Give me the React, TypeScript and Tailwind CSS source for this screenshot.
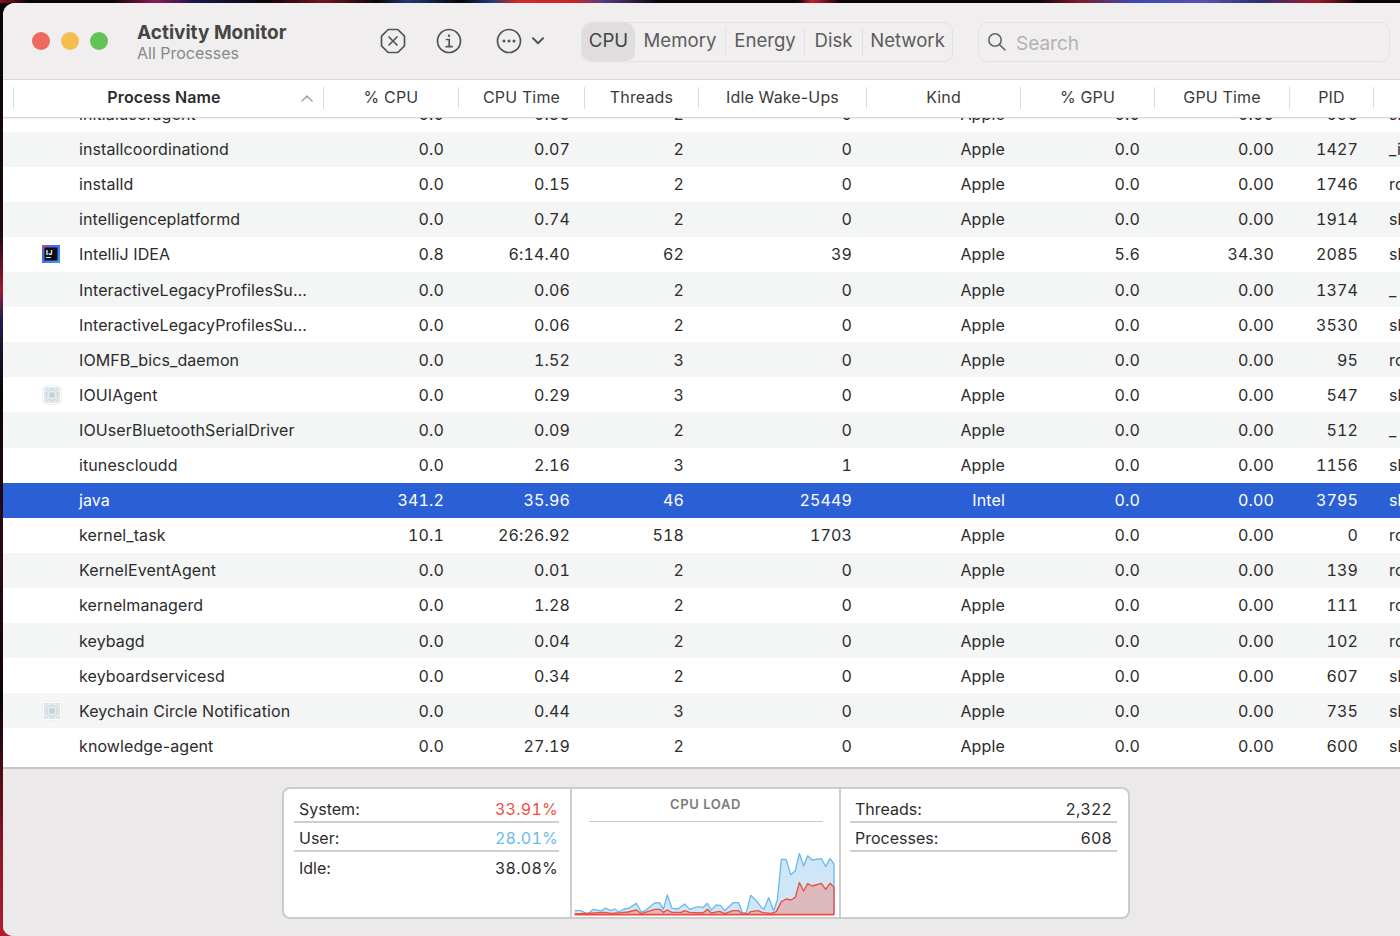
import React from "react";

const COLS = ["w-[135px]", "w-[126px]", "w-[114px]", "w-[168px]", "w-[154px]", "w-[134px]", "w-[135px]", "w-[84px]"];
const CELL = ["pr-[15px]", "pr-[15px]", "pr-[15px]", "pr-[15px]", "pr-[16px]", "pr-[15px]", "pr-[16px]", "pr-[16px]"];
const HEAD = ["% CPU", "CPU Time", "Threads", "Idle Wake-Ups", "Kind", "% GPU", "GPU Time", "PID"];

type Row = { name: string; icon?: "ij" | "app"; v: string[]; user: string; sel?: boolean };

const mk = (name: string, a: string, b: string, c: string, d: string, e: string, f: string, g: string, h: string, user: string, icon?: "ij" | "app", sel?: boolean): Row => ({
  name, icon, sel, user, v: [a, b, c, d, e, f, g, h],
});

const ROWS: Row[] = [
  mk("initialuseragent", "0.0", "0.35", "2", "0", "Apple", "0.0", "0.00", "590", "sh"),
  mk("installcoordinationd", "0.0", "0.07", "2", "0", "Apple", "0.0", "0.00", "1427", "_i"),
  mk("installd", "0.0", "0.15", "2", "0", "Apple", "0.0", "0.00", "1746", "ro"),
  mk("intelligenceplatformd", "0.0", "0.74", "2", "0", "Apple", "0.0", "0.00", "1914", "sh"),
  mk("IntelliJ IDEA", "0.8", "6:14.40", "62", "39", "Apple", "5.6", "34.30", "2085", "sh", "ij"),
  mk("InteractiveLegacyProfilesSu…", "0.0", "0.06", "2", "0", "Apple", "0.0", "0.00", "1374", "_"),
  mk("InteractiveLegacyProfilesSu…", "0.0", "0.06", "2", "0", "Apple", "0.0", "0.00", "3530", "sh"),
  mk("IOMFB_bics_daemon", "0.0", "1.52", "3", "0", "Apple", "0.0", "0.00", "95", "ro"),
  mk("IOUIAgent", "0.0", "0.29", "3", "0", "Apple", "0.0", "0.00", "547", "sh", "app"),
  mk("IOUserBluetoothSerialDriver", "0.0", "0.09", "2", "0", "Apple", "0.0", "0.00", "512", "_"),
  mk("itunescloudd", "0.0", "2.16", "3", "1", "Apple", "0.0", "0.00", "1156", "sh"),
  mk("java", "341.2", "35.96", "46", "25449", "Intel", "0.0", "0.00", "3795", "sh", undefined, true),
  mk("kernel_task", "10.1", "26:26.92", "518", "1703", "Apple", "0.0", "0.00", "0", "ro"),
  mk("KernelEventAgent", "0.0", "0.01", "2", "0", "Apple", "0.0", "0.00", "139", "ro"),
  mk("kernelmanagerd", "0.0", "1.28", "2", "0", "Apple", "0.0", "0.00", "111", "ro"),
  mk("keybagd", "0.0", "0.04", "2", "0", "Apple", "0.0", "0.00", "102", "ro"),
  mk("keyboardservicesd", "0.0", "0.34", "2", "0", "Apple", "0.0", "0.00", "607", "sh"),
  mk("Keychain Circle Notification", "0.0", "0.44", "3", "0", "Apple", "0.0", "0.00", "735", "sh", "app"),
  mk("knowledge-agent", "0.0", "27.19", "2", "0", "Apple", "0.0", "0.00", "600", "sh"),
];

function IJIcon() {
  return (
    <svg width="18" height="18" viewBox="0 0 18 18">
      <defs>
        <linearGradient id="ijg" x1="0" y1="0" x2="1" y2="1">
          <stop offset="0" stopColor="#c24a8a" />
          <stop offset="0.35" stopColor="#3b6cf0" />
          <stop offset="1" stopColor="#3fa0f0" />
        </linearGradient>
      </defs>
      <rect width="18" height="18" fill="url(#ijg)" />
      <rect x="2.5" y="2.5" width="13" height="13" fill="#0b0b12" />
      <text x="4" y="9.5" fontSize="6.5" fontWeight="800" letterSpacing="0.6" fill="#fff" fontFamily="Inter, sans-serif">IJ</text>
      <rect x="4" y="12" width="5" height="1" fill="#ddd" />
    </svg>
  );
}

function AppIcon() {
  return (
    <svg width="20" height="20" viewBox="0 0 20 20">
      <rect x="0.5" y="0.5" width="19" height="19" rx="3.5" fill="#ffffff" stroke="#eef0f1" />
      <rect x="2" y="2" width="16" height="16" rx="1.5" fill="#dde5ea" />
      <path d="M2 6.5h16M2 13.5h16M6.5 2v16M13.5 2v16" stroke="#e8edf0" strokeWidth="1" />
      <circle cx="10" cy="10" r="5.4" fill="none" stroke="#cdd8de" strokeWidth="1" />
      <circle cx="10" cy="10" r="2.8" fill="#c3d0d8" />
    </svg>
  );
}

function TableRow({ r, idx }: { r: Row; idx: number }) {
  const bg = r.sel ? "bg-[#2a5fd6] text-white" : idx % 2 === 1 ? "bg-[#f4f5f5] text-[#2c2c2c]" : "bg-white text-[#2c2c2c]";
  return (
    <div className={`flex h-[35.12px] items-center whitespace-nowrap ${bg}`}>
      <div className="flex w-[321px] items-center">
        <div className="flex w-[76px] justify-start pl-[39px]">
          {r.icon === "ij" && <IJIcon />}
          {r.icon === "app" && <AppIcon />}
        </div>
        <span className="tracking-[0.1px]">{r.name}</span>
      </div>
      {r.v.map((t, i) => (
        <div key={i} className={`${COLS[i]} ${CELL[i]} text-right tabular-nums`}>
          {t}
        </div>
      ))}
      <div className="flex-1 overflow-hidden pl-[15px]">{r.user}</div>
    </div>
  );
}

const BLUE =
  "30,392 48,392 70,402 85,388 110,393 122,384 138,392 150,387 163,396 178,387 192,385 215,370 230,396 240,393 270,369 285,368 296,388 308,345 322,385 340,387 360,372 375,388 400,380 415,383 428,370 440,390 455,375 468,377 480,392 505,368 522,368 533,397 545,398 558,346 575,362 590,382 598,388 612,353 627,392 638,360 650,238 665,239 678,284 692,272 704,220 717,258 729,227 742,240 770,236 783,260 796,236 808,252 808,404";
const RED =
  "30,402 120,397 140,400 170,398 190,396 215,390 230,401 270,388 285,388 296,397 308,390 322,397 350,397 360,392 375,397 415,399 428,388 440,399 465,394 480,401 505,392 522,392 533,402 550,402 558,395 580,392 595,398 620,400 635,395 650,365 665,357 678,360 692,352 704,308 717,333 729,311 742,318 770,310 783,328 796,310 808,322 808,404";

function Chart() {
  return (
    <svg width="262" height="70" viewBox="28 198 786 210" className="block">
      <polygon points={`30,404 ${BLUE}`} fill="#cfe6f7" />
      <polygon points={`30,404 ${RED}`} fill="#dbb9bd" />
      <polyline points={`${BLUE}`} fill="none" stroke="#6cb9ee" strokeWidth="4" strokeLinejoin="round" />
      <polyline points={`${RED}`} fill="none" stroke="#ee4c3e" strokeWidth="4" strokeLinejoin="round" />
      <line x1="30" y1="404" x2="808" y2="404" stroke="#ee4c3e" strokeWidth="5" />
    </svg>
  );
}

function StatRow({ label, value, color, line }: { label: string; value: string; color: string; line: boolean }) {
  return (
    <div className={`flex h-[29px] items-center justify-between pl-[5px] pr-[1px] pt-[3px] ${line ? "border-b-2 border-[#cfcfcf]" : ""}`}>
      <span className="tracking-normal">{label}</span>
      <span className={`tabular-nums tracking-[0.25px] ${color}`}>{value}</span>
    </div>
  );
}

export default function App() {
  return (
    <div className="flex h-[936px] w-[1400px] flex-col overflow-hidden bg-[linear-gradient(180deg,#0a0508_0%,#1a0a14_25%,#a01830_31%,#202050_34%,#0a0508_42%,#300818_60%,#0a0508_75%,#8c1424_90%,#b01c30_100%)] text-[16px] tracking-[0.15px] text-[#2c2c2c] [font-family:Inter,'Liberation_Sans',sans-serif]">
      <div className="h-[3px] shrink-0 bg-[linear-gradient(90deg,#8c1020_0%,#0a0508_2%,#0a0508_8%,#8c1a50_11%,#16184a_14%,#0a0508_19%,#701420_23%,#0a0508_27%,#1c3a78_29%,#0a0508_33%,#1c3a78_35%,#d02a28_37%,#c82428_41%,#5a3a80_43%,#0a0508_47%,#0a0508_57%,#c82030_58%,#0a0508_60%,#0a0508_74%,#801828_77%,#3a4ab0_81%,#5a50b0_86%,#2a3070_90%,#a01828_94%,#0a0508_97%,#0a0508_100%)]" />
      <div className="ml-[3px] flex min-h-0 flex-1 flex-col overflow-hidden rounded-tl-[12px] rounded-bl-[10px] bg-white">
        {/* toolbar */}
        <div className="flex h-[77px] shrink-0 border-b border-[#d9d8d8] bg-[#f0eeef]">
          <div className="flex items-center gap-[11px] pb-[1px] pl-[29px]">
            <span className="h-[18px] w-[18px] rounded-full bg-[#ee6a5f]" />
            <span className="h-[18px] w-[18px] rounded-full bg-[#f5bd4f]" />
            <span className="h-[18px] w-[18px] rounded-full bg-[#61c454]" />
          </div>
          <div className="ml-[29px] flex w-[243px] flex-col pt-[18px]">
            <div className="text-[19px] font-bold leading-[24px] tracking-normal text-[#454545]">Activity Monitor</div>
            <div className="text-[16px] leading-[17px] tracking-normal text-[#888888]">All Processes</div>
          </div>
          <div className="flex items-center pb-[1px] text-[#555555]">
            <svg width="26" height="26" viewBox="0 0 26 26" fill="none" stroke="currentColor" strokeWidth="1.7">
              <path d="M8.2 1.5h9.6l6.7 6.7v9.6l-6.7 6.7H8.2l-6.7-6.7V8.2z" strokeLinejoin="round" />
              <path d="M9 9l8 8M17 9l-8 8" strokeLinecap="round" />
            </svg>
            <svg className="ml-[30px]" width="26" height="26" viewBox="0 0 26 26" fill="none" stroke="currentColor" strokeWidth="1.7">
              <circle cx="13" cy="13" r="11.5" />
              <path d="M10.5 11.5H13.2V18.5M10.2 18.7h6" strokeLinecap="round" />
              <circle cx="13" cy="7.8" r="1.2" fill="currentColor" stroke="none" />
            </svg>
            <svg className="ml-[34px]" width="26" height="26" viewBox="0 0 26 26" fill="none" stroke="currentColor" strokeWidth="1.7">
              <circle cx="13" cy="13" r="11.5" />
              <circle cx="8" cy="13" r="1.5" fill="currentColor" stroke="none" />
              <circle cx="13" cy="13" r="1.5" fill="currentColor" stroke="none" />
              <circle cx="18" cy="13" r="1.5" fill="currentColor" stroke="none" />
            </svg>
            <svg className="ml-[10px]" width="12" height="8" viewBox="0 0 12 8" fill="none" stroke="currentColor" strokeWidth="2">
              <path d="M1 1.2l5 5 5-5" strokeLinecap="round" strokeLinejoin="round" />
            </svg>
          </div>
          <div className="ml-[37px] mt-[19px] flex h-[40px] w-[372px] items-center rounded-[9px] border border-[#e3e1e2] text-[18.6px] tracking-normal text-[#5c5c5c]">
            <div className="flex h-full w-[53px] items-center justify-center rounded-[9px] bg-[#dfdddd] pb-[3px] text-[#444444]">CPU</div>
            <div className="flex w-[90px] justify-center pb-[3px]">Memory</div>
            <div className="h-[28px] w-px bg-[#e3e1e2]" />
            <div className="flex w-[78px] justify-center pb-[3px]">Energy</div>
            <div className="h-[28px] w-px bg-[#e3e1e2]" />
            <div className="flex w-[57px] justify-center pb-[3px]">Disk</div>
            <div className="h-[28px] w-px bg-[#e3e1e2]" />
            <div className="flex flex-1 justify-center pb-[3px]">Network</div>
          </div>
          <div className="ml-[25px] mt-[19px] flex h-[40px] w-[412px] items-center rounded-[9px] border border-[#e3e1e2] pl-[8px]">
            <svg width="20" height="20" viewBox="0 0 20 20" fill="none" stroke="#666666" strokeWidth="1.6">
              <circle cx="8" cy="8" r="6.2" />
              <path d="M12.6 12.6L18 18" strokeLinecap="round" />
            </svg>
            <span className="ml-[9px] pt-[5px] text-[19px] tracking-normal text-[#b3b2b2]">Search</span>
          </div>
        </div>
        {/* header */}
        <div className="relative z-10 flex h-[38px] shrink-0 items-center whitespace-nowrap border-b border-[#d8d8d8] bg-white pb-[1px] shadow-[0_1px_1px_rgba(0,0,0,0.06)]">
          <div className="flex w-[321px] items-center">
            <div className="ml-[10px] h-[22px] w-px bg-[#dddddd]" />
            <div className="w-[300px] pb-[2px] text-center font-semibold text-[#2c2c2c]">Process Name</div>
            <svg width="12" height="7" viewBox="0 0 12 7" fill="none" stroke="#a8a8a8" strokeWidth="1.6" className="-ml-[13px]">
              <path d="M1 6l5-5 5 5" strokeLinecap="round" strokeLinejoin="round" />
            </svg>
            <div className="ml-[10px] h-[22px] w-px bg-[#dddddd]" />
          </div>
          {HEAD.map((h, i) => (
            <div key={h} className={`${COLS[i]} flex items-center`}>
              <div className="flex-1 pb-[2px] text-center text-[#3a3a3a]">{h}</div>
              <div className="h-[22px] w-px bg-[#dddddd]" />
            </div>
          ))}
        </div>
        {/* list */}
        <div className="h-[651px] shrink-0 overflow-hidden border-b-2 border-[#c4c4c4] bg-white">
          <div className="-mt-[21.6px]">
            {ROWS.map((r, i) => (
              <TableRow key={i} r={r} idx={i} />
            ))}
          </div>
        </div>
        {/* bottom */}
        <div className="flex flex-1 justify-start bg-[#ebe9e9] pl-[279px] pt-[18px]">
          <div className="flex h-[132px] w-[848px] rounded-[8px] border-2 border-[#cccccc] bg-white">
            <div className="w-[288px] border-r-2 border-[#cccccc] pl-[10px] pr-[11px] pt-[5px]">
              <StatRow label="System:" value="33.91%" color="text-[#ef4f45]" line />
              <StatRow label="User:" value="28.01%" color="text-[#6cb9ee]" line />
              <StatRow label="Idle:" value="38.08%" color="" line={false} />
            </div>
            <div className="flex w-[269px] flex-col items-center border-r-2 border-[#cccccc]">
              <div className="mt-[6px] h-[27px] w-[234px] border-b border-[#c9c9c9] text-center text-[13px] font-semibold leading-[18px] tracking-[0.6px] text-[#7c7c7c]">CPU LOAD</div>
              <div className="mt-auto pb-[1px] pr-[2px]">
                <Chart />
              </div>
            </div>
            <div className="flex-1 pl-[9px] pr-[11px] pt-[5px]">
              <div className="flex h-[29px] items-center justify-between border-b-2 border-[#cfcfcf] pl-[5px] pr-[5px] pt-[3px]">
                <span className="tracking-normal">Threads:</span>
                <span className="tabular-nums">2,322</span>
              </div>
              <div className="flex h-[29px] items-center justify-between border-b-2 border-[#cfcfcf] pl-[5px] pr-[5px] pt-[3px]">
                <span className="tracking-normal">Processes:</span>
                <span className="tabular-nums">608</span>
              </div>
            </div>
          </div>
        </div>
      </div>
    </div>
  );
}
